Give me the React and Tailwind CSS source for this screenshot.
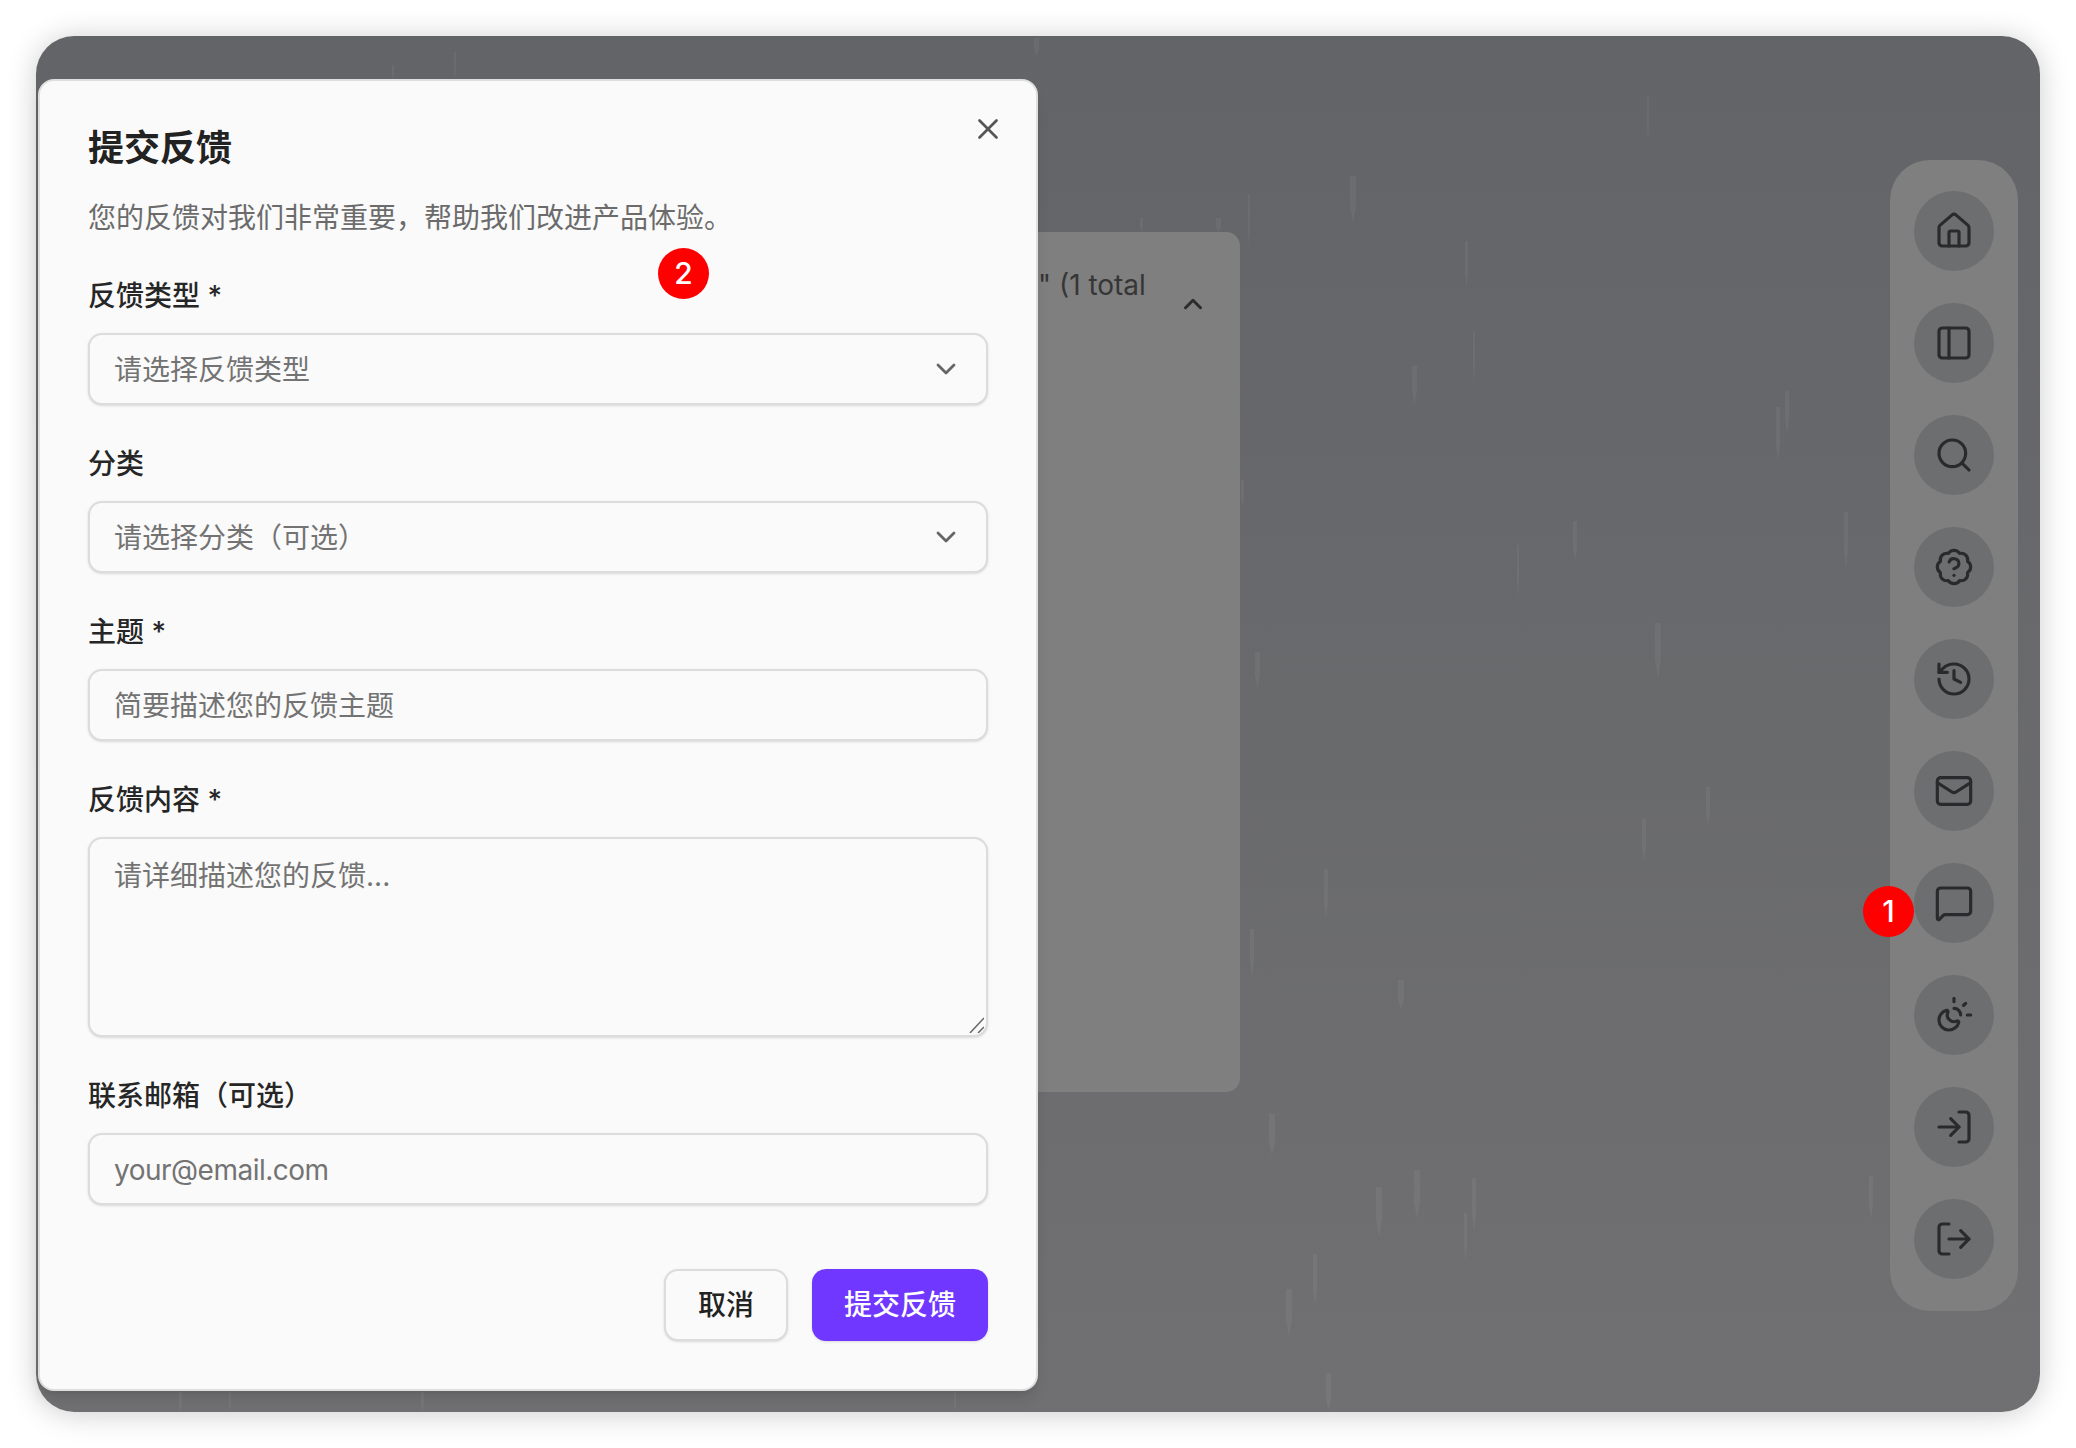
import { BadgeHelp, ChevronDown, ChevronUp, History, House, LogIn, LogOut, Mail, MessageSquare, PanelLeft, Search, SunMoon, X } from 'lucide-react';

const navIcons = [House, PanelLeft, Search, BadgeHelp, History, Mail, MessageSquare, SunMoon, LogIn, LogOut];

// x, y, width, height of the rain streaks behind the dialog
const drops = [
  [1034, 38, 5, 18], [392, 65, 2, 15], [454, 52, 2, 28], [1647, 96, 2, 47], [1350, 176, 6, 47], [1465, 241, 3, 47],
  [1248, 194, 2, 54], [1473, 331, 2, 53], [1412, 366, 5, 39], [1785, 391, 4, 44], [1776, 407, 4, 55],
  [1573, 521, 4, 41], [1517, 545, 2, 55], [1844, 512, 4, 59], [1655, 623, 6, 56], [1255, 652, 5, 36],
  [1241, 480, 3, 27], [1216, 218, 5, 14], [1140, 218, 3, 14], [1706, 787, 4, 39], [1642, 819, 4, 43],
  [1324, 869, 4, 50], [1250, 929, 4, 49], [1398, 980, 6, 30], [1269, 1114, 6, 42], [1414, 1170, 6, 49],
  [1376, 1187, 6, 50], [1472, 1178, 4, 54], [1464, 1213, 3, 50], [1869, 1176, 4, 44], [1313, 1254, 4, 52],
  [1286, 1289, 6, 48], [1326, 1373, 5, 38], [179, 1392, 3, 20], [229, 1392, 2, 20], [421, 1392, 3, 20], [954, 1392, 2, 20],
];

const fontStack = 'font-[Inter,"Noto_Sans_CJK_SC",sans-serif]';
const fieldBase = 'w-full rounded-[14px] border-2 border-[#dcdcdc] bg-[#fafafa] px-6 text-[28px] text-[#737373] shadow-sm outline-none placeholder:text-[#737373]';
const fieldClass = `${fieldBase} h-[72px] pt-[1px]`;

function Label({ children }) {
  return <div className="h-10 mb-[19px] text-[28px] leading-[44px] font-medium text-[#262626]">{children}</div>;
}

function SelectBox({ text }) {
  return (
    <div className={`${fieldClass} flex items-center justify-between`}>
      <span>{text}</span>
      <ChevronDown size={32} strokeWidth={2.1} className="text-[#666] mt-[-1px]" />
    </div>
  );
}

function Badge({ className, children }) {
  return (
    <div className={`absolute w-[51px] h-[51px] rounded-full bg-[#ff0000] flex items-center justify-center text-white text-[30px] font-medium ${className}`}>
      {children}
    </div>
  );
}

export default function App() {
  return (
    <div className={`w-[2076px] h-[1448px] bg-white p-9 ${fontStack}`}>
      <div className="relative h-full flex justify-between rounded-[38px] bg-gradient-to-b from-[#636467] to-[#707072] shadow-[0_2px_30px_rgba(0,0,0,0.2)]">
        <svg className="absolute inset-0 w-full h-full" viewBox="36 36 2004 1376">
          {drops.map(([x, y, w, h], i) => (
            <path key={i} d={`M${x} ${y}h${w}v${h * 0.65}L${x + w / 2} ${y + h}L${x} ${y + h * 0.65}z`} fill="#ffffff" fillOpacity="0.05" />
          ))}
        </svg>

        <div className="relative ml-[604px] mt-[196px] w-[600px] h-[860px] rounded-r-[14px] bg-[#7f7f7f] pl-[398px] pr-[32px] pt-[33px] flex items-start justify-between">
          <span className="text-[28px] leading-10 text-[#363636] whitespace-nowrap">" (1 total</span>
          <ChevronUp size={30} strokeWidth={2.4} className="text-[#2c2c2c] mt-[24px]" />
        </div>

        <div className="relative mt-[124px] mr-[22px] w-32 h-[1151px] rounded-[40px] bg-[#7f7f7f] pt-[31px] flex flex-col items-center gap-8">
          {navIcons.map((Icon, i) => (
            <div key={i} className="w-20 h-20 rounded-full bg-[#6d6e70] flex items-center justify-center text-[#2a2a2c]">
              <Icon size={40} strokeWidth={1.9} />
            </div>
          ))}
        </div>

        <div className="absolute left-[2px] top-[43px] w-[1000px] h-[1312px] rounded-2xl border-2 border-[#dedede] bg-[#fafafa] px-[48px] pt-[49px] shadow-lg">
          <button className="absolute right-[31px] top-[31px] text-[#555]">
            <X size={34} strokeWidth={1.9} />
          </button>
          <h2 className="text-[36px] leading-9 font-semibold text-[#222]">提交反馈</h2>
          <p className="mt-[32px] mb-[36px] text-[28px] leading-10 text-[#6b6b6b]">您的反馈对我们非常重要，帮助我们改进产品体验。</p>

          <Label>反馈类型 *</Label>
          <SelectBox text="请选择反馈类型" />

          <div className="mt-[37px]"><Label>分类</Label></div>
          <SelectBox text="请选择分类（可选）" />

          <div className="mt-[37px]"><Label>主题 *</Label></div>
          <input className={fieldClass} placeholder="简要描述您的反馈主题" />

          <div className="mt-[37px]"><Label>反馈内容 *</Label></div>
          <div className="relative">
            <textarea className={`${fieldBase} h-[200px] pt-[17px] leading-10 block resize-none`} placeholder="请详细描述您的反馈..." />
            <svg className="absolute right-[4px] bottom-[4px]" width="16" height="16" viewBox="0 0 16 16">
              <path d="M16 1L2 16M16 10L10 16" stroke="#666" strokeWidth="1.5" fill="none" />
            </svg>
          </div>

          <div className="mt-[37px]"><Label>联系邮箱（可选）</Label></div>
          <input className={`${fieldClass} tracking-[-0.5px]`} placeholder="your@email.com" />

          <div className="mt-[64px] flex justify-end gap-6">
            <button className="w-[124px] h-[72px] rounded-[14px] border-2 border-[#dcdcdc] bg-[#fafafa] text-[28px] font-medium text-[#222] shadow-sm">取消</button>
            <button className="w-[176px] h-[72px] rounded-[14px] bg-[#6f37ff] text-[28px] font-medium text-white shadow-sm">提交反馈</button>
          </div>
        </div>

        <Badge className="left-[622px] top-[212px]">2</Badge>
        <Badge className="left-[1827px] top-[850px]">1</Badge>
      </div>
    </div>
  );
}
